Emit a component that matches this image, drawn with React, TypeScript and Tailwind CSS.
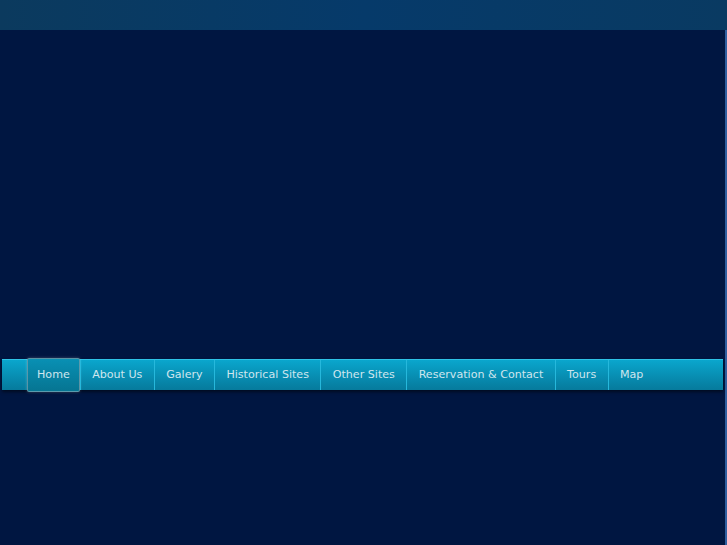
import React from "react"

const links = [
  "Home",
  "About Us",
  "Galery",
  "Historical Sites",
  "Other Sites",
  "Reservation & Contact",
  "Tours",
  "Map",
]

export default function App() {
  return (
    <div className="flex h-[545px] w-[727px] flex-col overflow-hidden bg-[#001641] font-['DejaVu_Sans',sans-serif]">
      <div className="h-[30px] shrink-0 bg-gradient-to-r from-[#0b3a5e] via-[#063a6a] to-[#093a62]" />
      <div className="flex flex-1 flex-col border-r-2 border-[#2f5f9f]">
        <div className="h-[329px] shrink-0" />
        <nav className="mx-[2px] h-[31px] border-t border-[#2ec3e6] bg-gradient-to-b from-[#0aa6cd] to-[#067a9c] shadow-[0_2px_3px_rgba(0,0,0,0.5)]">
          <ul className="ml-[25px] flex h-full items-stretch">
            {links.map((label, i) => (
              <li
                key={label}
                className={
                  i === 0
                    ? "-my-[2px] flex items-center rounded-[2px] border border-[#7f9fab]/70 bg-gradient-to-b from-[#0990b4] to-[#067592] px-[9px] text-[11.1px] text-[#cfe6ee] shadow-[0_0_3px_rgba(255,255,255,0.25)]"
                    : "flex items-center border-l border-[#26b8dc] px-[11.4px] text-[11.1px] text-[#cfe6ee]"
                }
              >
                {label}
              </li>
            ))}
          </ul>
        </nav>
      </div>
    </div>
  )
}
